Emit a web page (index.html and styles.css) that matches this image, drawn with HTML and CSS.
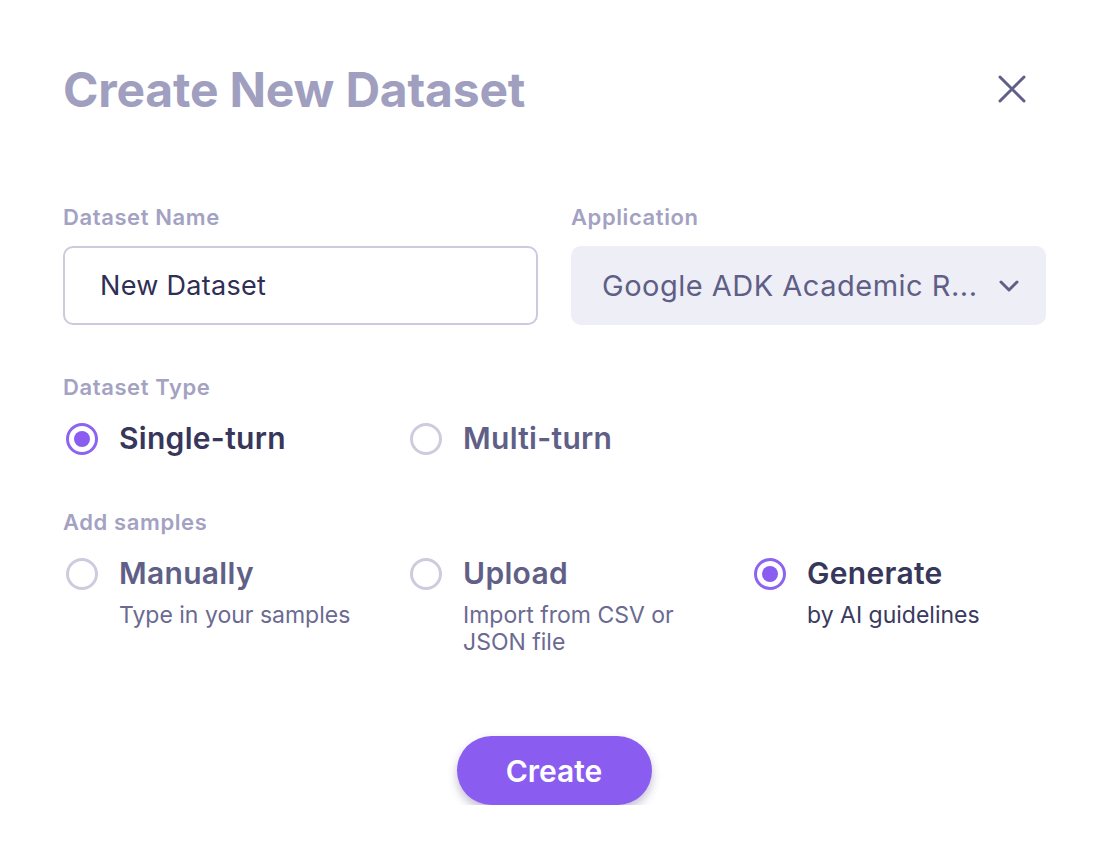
FILE: index.html
```html
<!DOCTYPE html>
<html>
<head>
<meta charset="utf-8">
<link rel="stylesheet" href="styles.css">
</head>
<body>
<div class="dialog">
  <div class="header">
    <h1 class="title">Create New Dataset</h1>
    <button class="close" aria-label="Close">
      <svg width="30" height="30" viewBox="0 0 30 30"><path d="M3 3L27 27M27 3L3 27" stroke="#605f8a" stroke-width="3" stroke-linecap="round"/></svg>
    </button>
  </div>

  <div class="fields">
    <div class="field">
      <div class="label">Dataset Name</div>
      <div class="input">New Dataset</div>
    </div>
    <div class="field">
      <div class="label">Application</div>
      <div class="select">
        <span class="select-text">Google ADK Academic R...</span>
        <svg width="22" height="14" viewBox="0 0 22 14"><path d="M3 3L11 11L19 3" fill="none" stroke="#605f8a" stroke-width="3" stroke-linecap="round" stroke-linejoin="round"/></svg>
      </div>
    </div>
  </div>

  <div class="section">
    <div class="label">Dataset Type</div>
    <div class="options">
      <div class="option">
        <span class="radio checked"></span>
        <div class="opt-text"><div class="opt-title active">Single-turn</div></div>
      </div>
      <div class="option">
        <span class="radio"></span>
        <div class="opt-text"><div class="opt-title">Multi-turn</div></div>
      </div>
    </div>
  </div>

  <div class="section samples">
    <div class="label">Add samples</div>
    <div class="options">
      <div class="option">
        <span class="radio"></span>
        <div class="opt-text"><div class="opt-title">Manually</div><div class="opt-sub">Type in your samples</div></div>
      </div>
      <div class="option">
        <span class="radio"></span>
        <div class="opt-text"><div class="opt-title">Upload</div><div class="opt-sub">Import from CSV or<br>JSON file</div></div>
      </div>
      <div class="option">
        <span class="radio checked"></span>
        <div class="opt-text"><div class="opt-title active">Generate</div><div class="opt-sub active-sub">by AI guidelines</div></div>
      </div>
    </div>
  </div>

  <div class="footer">
    <button class="create">Create</button>
  </div>
</div>
</body>
</html>
```

FILE: styles.css
```css
html, body {
  margin: 0;
  padding: 0;
  background: #ffffff;
}
body {
  font-family: Inter, "Noto Sans", sans-serif;
}
.dialog {
  width: 982px;
  padding: 60px 0 0 63px;
}
.header {
  display: flex;
  align-items: center;
  justify-content: space-between;
  height: 58px;
}
.title {
  margin: 0;
  font-size: 48px;
  font-weight: 700;
  color: #a09fbf;
  letter-spacing: -0.2px;
}
.close {
  border: none;
  background: none;
  padding: 0;
  margin-right: 18px;
  width: 30px;
  height: 30px;
  display: flex;
}
.fields {
  display: grid;
  grid-template-columns: 475px 475px;
  column-gap: 33px;
  margin-top: 84px;
}
.label {
  font-size: 22px;
  font-weight: 600;
  color: #a3a2c2;
  line-height: 30px;
  letter-spacing: 0.6px;
}
.input {
  margin-top: 14px;
  height: 75px;
  border: 2px solid #cbcade;
  border-radius: 10px;
  box-sizing: content-box;
  display: flex;
  align-items: center;
  padding-left: 35px;
  font-size: 27px;
  letter-spacing: 0.3px;
  color: #2f2e54;
}
.select {
  margin-top: 14px;
  height: 79px;
  border-radius: 10px;
  background: #eeeef6;
  display: flex;
  align-items: center;
  justify-content: space-between;
  padding: 0 26px 0 31px;
  font-size: 29px;
  letter-spacing: 0.5px;
  color: #5f5e86;
}
.section {
  margin-top: 47px;
}
.options {
  display: flex;
  margin-top: 18px;
}
.option {
  display: flex;
  width: 344px;
  flex: none;
}
.option:last-child { width: auto; }
.radio {
  flex: none;
  width: 26px;
  height: 26px;
  border: 3px solid #cdccdf;
  border-radius: 50%;
  margin: 3px 21px 0 3px;
  position: relative;
}
.radio.checked {
  border-color: #8d63f1;
}
.radio.checked::after {
  content: "";
  position: absolute;
  left: 5px;
  top: 5px;
  width: 16px;
  height: 16px;
  border-radius: 50%;
  background: #8a5df0;
}
.opt-title {
  font-size: 30px;
  font-weight: 600;
  color: #605f87;
  line-height: 36px;
  letter-spacing: 0.3px;
}
.opt-title.active { color: #37365b; }
.opt-sub {
  font-size: 23px;
  color: #6b6a91;
  line-height: 27px;
  margin-top: 11px;
}
.opt-sub.active-sub { color: #3a395e; }
.samples { margin-top: 51px; }
.footer {
  display: flex;
  justify-content: center;
  margin-top: 80px;
}
.create {
  width: 195px;
  height: 69px;
  border: none;
  border-radius: 35px;
  background: #8a5df0;
  color: #ffffff;
  font-family: Inter, "Noto Sans", sans-serif;
  font-size: 30px;
  font-weight: 600;
  box-shadow: 0 5px 10px rgba(60, 40, 110, 0.3);
}
```
